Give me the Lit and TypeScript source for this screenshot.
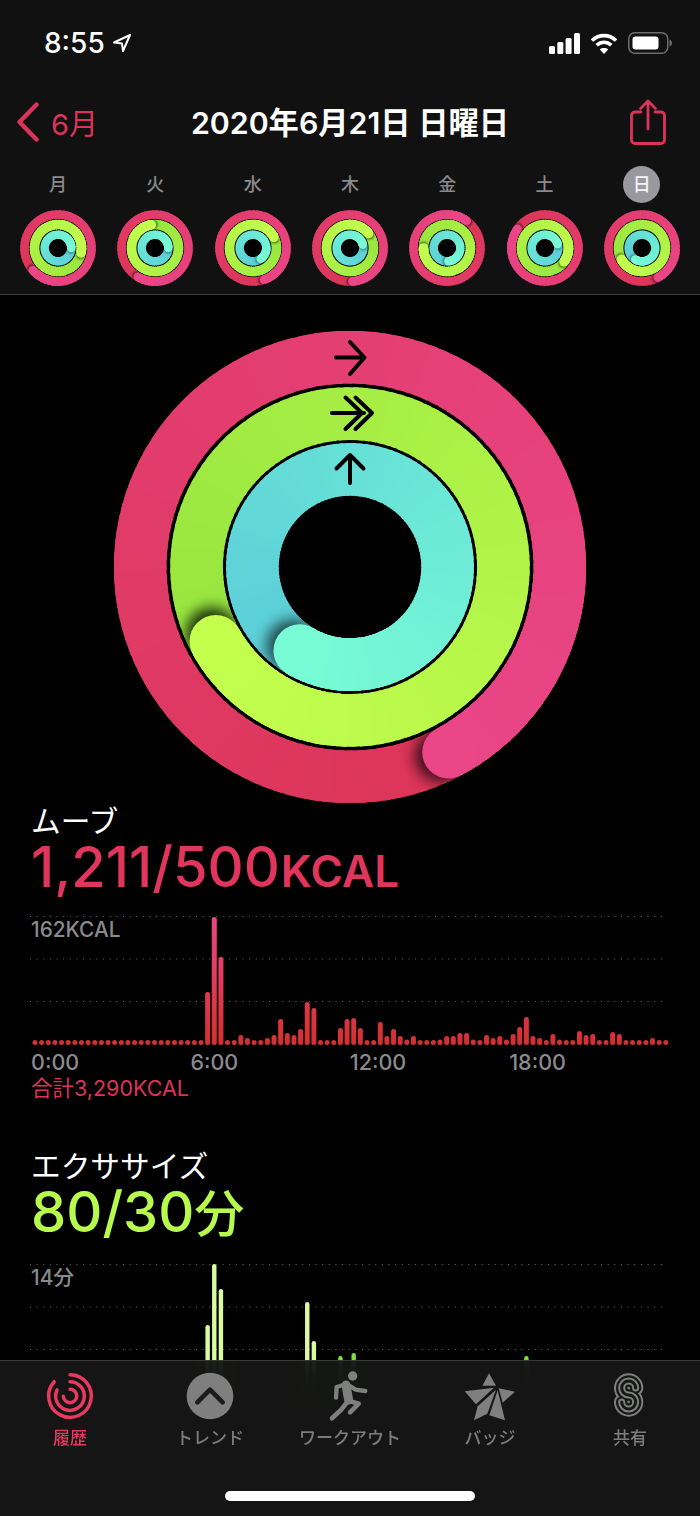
import { LitElement, html, css, svg } from "lit";
import { customElement } from "lit/decorators.js";

type RGB = [number, number, number];
const PINK: [RGB, RGB] = [[220, 53, 88], [234, 70, 136]];
const GREEN: [RGB, RGB] = [[151, 229, 63], [196, 255, 78]];
const BLUE: [RGB, RGB] = [[90, 204, 216], [120, 252, 214]];

function pt(cx: number, cy: number, r: number, deg: number) {
  const a = (deg * Math.PI) / 180;
  return [cx + r * Math.sin(a), cy - r * Math.cos(a)];
}
function arc(cx: number, cy: number, r: number, a0: number, a1: number) {
  const [x0, y0] = pt(cx, cy, r, a0);
  const [x1, y1] = pt(cx, cy, r, a1);
  return `M${x0.toFixed(2)} ${y0.toFixed(2)}A${r} ${r} 0 0 1 ${x1.toFixed(2)} ${y1.toFixed(2)}`;
}
function mix(c: [RGB, RGB], t: number) {
  return `rgb(${c[0].map((v, i) => Math.round(v + (c[1][i] - v) * t)).join(",")})`;
}

let uid = 0;
function ring(cx: number, cy: number, r: number, w: number, cap: number, c: [RGB, RGB], step: number, blurId: string, shadow: number) {
  const id = `clip${uid++}`;
  const segs = (from: number, to: number) => {
    const out = [];
    for (let d = from; d < to; d += step) {
      const end = Math.min(d + step * 1.6, 360);
      out.push(svg`<path d=${arc(cx, cy, r, cap + d, cap + end)} stroke=${mix(c, (d + step / 2) / 360)} stroke-width=${w} fill="none"></path>`);
    }
    return out;
  };
  const [hx, hy] = pt(cx, cy, r, cap);
  const shift = (w / r) * 57.3 * 0.16;
  const [sx, sy] = pt(cx, cy, r, cap + shift);
  const ro = r + w / 2;
  const ri = r - w / 2;
  const annulus = `M${cx - ro} ${cy}a${ro} ${ro} 0 1 0 ${2 * ro} 0a${ro} ${ro} 0 1 0 ${-2 * ro} 0ZM${cx - ri} ${cy}a${ri} ${ri} 0 1 0 ${2 * ri} 0a${ri} ${ri} 0 1 0 ${-2 * ri} 0Z`;
  return svg`
    ${segs(0, 360)}
    <clipPath id=${id}><path d=${annulus} clip-rule="evenodd"></path></clipPath>
    <g clip-path=${`url(#${id})`}>
      <circle cx=${sx} cy=${sy} r=${w / 2} fill="#000" opacity=${shadow} filter=${`url(#${blurId})`}></circle>
    </g>
    ${segs(300, 360)}
    <circle cx=${hx} cy=${hy} r=${w / 2} fill=${mix(c, 1)}></circle>`;
}

const MINI: [number, number, number][] = [
  [229, 102, 90], [211, 351, 90], [161, 63, 145], [176, 52, 76],
  [36, 270, 174], [305, 126, 74], [152, 241, 211],
];
const DAYS = ["月", "火", "水", "木", "金", "土", "日"];

const MOVE: Record<number, number> = {
  26: 53, 27: 128, 28: 88, 31: 10, 32: 7, 35: 7, 36: 10, 37: 26, 38: 12, 39: 10, 40: 16, 41: 43, 42: 37,
  46: 17, 47: 26, 48: 27, 49: 17, 52: 23, 53: 9, 54: 16, 55: 9, 56: 5.5, 57: 9, 61: 5.5, 62: 9, 63: 9, 64: 12,
  65: 12, 66: 5.5, 68: 10, 69: 7, 70: 9, 71: 5.5, 72: 11, 73: 18, 74: 28, 75: 9, 76: 7, 78: 11, 79: 5.5, 82: 14,
  83: 10, 84: 11, 87: 13, 88: 11, 93: 7,
};
const EXERCISE: [number, number][] = [
  [26, 67], [27, 128], [28, 103], [41, 90], [42, 51], [46, 36], [48, 39], [74, 36],
];
const STEP = 6.64;
const X0 = 32.5;
const BW = 5;

@customElement("app-root")
export class AppRoot extends LitElement {
  static styles = css`
    :host {
      display: block;
      position: relative;
      width: 700px;
      height: 1516px;
      overflow: hidden;
      background: #000;
      color: #fff;
      font-family: Inter, "Noto Sans CJK JP", sans-serif;
    }
    .page { display: flex; flex-direction: column; height: 1516px; }
    header { flex: none; height: 295px; box-sizing: border-box; background: #111; border-bottom: 1px solid #3c3c3e; }
    .status { height: 86px; display: flex; align-items: center; justify-content: space-between; padding: 0 28px 0 44px; }
    .time { display: flex; align-items: center; gap: 7px; font-size: 28px; font-weight: 500; }
    .status-icons { display: flex; align-items: center; gap: 10px; }
    .nav { height: 72px; display: grid; grid-template-columns: 1fr auto 1fr; align-items: center; padding: 0 17px; }
    .back { display: flex; align-items: center; gap: 12px; color: #dc3459; font-size: 29px; }
    .title { font-size: 30.3px; font-weight: 600; white-space: nowrap; margin-top: -2px; }
    .share { justify-self: end; display: block; margin: -1px 17px 0 0; }
    .week { display: grid; grid-template-columns: repeat(7, 97.3px); padding: 8px 0 0 9.4px; }
    .day { display: flex; flex-direction: column; align-items: center; }
    .label { width: 37px; height: 37px; line-height: 37px; border-radius: 50%; text-align: center; font-size: 18px; font-weight: 500; color: #8a8a8e; }
    .label.on { background: #98989e; color: #f4f4f6; }
    .mini { display: block; margin-top: 7px; }
    main { flex: 1; min-height: 0; overflow: hidden; padding-top: 36px; }
    .big { display: block; margin: 0 auto; }
    section { padding: 0 31px; }
    .name { font-size: 29.7px; line-height: 36px; height: 36px; white-space: nowrap; }
    .value { font-size: 56px; line-height: 56px; height: 56px; font-weight: 500; white-space: nowrap; }
    .value small { font-size: 44px; font-weight: 600; margin-left: 1px; letter-spacing: 0.3px; }
    .value .unit { font-size: 50px; }
    .red { color: #e0355c; }
    .lime { color: #b8f94e; }
    .chart { position: relative; margin: 17px -31px 0; height: 137px; }
    .chart.ex { margin-top: 20px; height: 140px; }
    .chart svg { display: block; }
    .max { position: absolute; left: 31px; top: 6px; font-size: 20.8px; line-height: 24px; font-weight: 500; color: #8a8a8e; }
    .axis { display: grid; grid-template-columns: repeat(4, 159.4px); font-size: 21.5px; line-height: 26px; font-weight: 500; color: #8a8a8e; }
    .total { font-size: 21.5px; line-height: 26px; color: #dc3459; }
    .second { margin-top: 47px; }
    .tabbar {
      position: absolute; left: 0; right: 0; bottom: 0; height: 156px; box-sizing: border-box;
      background: rgba(21, 23, 21, 0.93); backdrop-filter: blur(18px);
      border-top: 1.5px solid #3a3a3a; display: flex; flex-direction: column;
    }
    .tabs { display: grid; grid-template-columns: repeat(5, 140px); }
    .tab { display: flex; flex-direction: column; align-items: center; padding-top: 4px; color: #7c7c7c; font-size: 17px; line-height: 24px; font-weight: 500; white-space: nowrap; }
    .tab svg { display: block; margin-bottom: 1px; }
    .tab.on { color: #e8395f; }
    .home { width: 250px; height: 10px; border-radius: 5px; background: #fff; margin: 41px auto 0; }
    .ic { fill: #7f7f7f; }
    .runner { fill: none; stroke: #7f7f7f; stroke-linecap: round; stroke-linejoin: round; }
    .arrows { fill: none; stroke: #000; stroke-width: 4; stroke-linecap: round; stroke-linejoin: round; }
  `;

  private bigRings() {
    const cx = 236, cy = 236;
    return html`<svg class="big" width="472" height="472" viewBox="0 0 472 472">
      <defs><filter id="blurBig" x="-50%" y="-50%" width="200%" height="200%"><feGaussianBlur stdDeviation="7"></feGaussianBlur></filter></defs>
      ${ring(cx, cy, 209.8, 52.6, 152, PINK, 3, "blurBig", 0.7)}
      ${ring(cx, cy, 153.4, 52.6, 241, GREEN, 3, "blurBig", 0.8)}
      ${ring(cx, cy, 97.6, 52.6, 211, BLUE, 3, "blurBig", 0.65)}
      <g class="arrows">
        <path d="M222 26.5H250.5M236 11L250.5 26.5L236 43"></path>
        <path d="M218 82H250M231.500 66.500L248 82L231.500 98M241.500 66.500L258 82L241.500 98"></path>
        <path d="M236 152V124M222.500 137.500L236 124L249.500 137.500"></path>
      </g>
    </svg>`;
  }

  private miniRing(i: number) {
    const [p, g, b] = MINI[i];
    const id = `blurMini${i}`;
    return html`<svg class="mini" width="76" height="76" viewBox="0 0 76 76">
      <defs><filter id=${id} x="-50%" y="-50%" width="200%" height="200%"><feGaussianBlur stdDeviation="1.2"></feGaussianBlur></filter></defs>
      <circle cx="38" cy="38" r="34" fill="#000"></circle>
      ${ring(38, 38, 33.5, 8.6, p, PINK, 6, id, 0.6)}
      ${ring(38, 38, 23.5, 9.6, g, GREEN, 6, id, 0.5)}
      ${ring(38, 38, 13.3, 8.4, b, BLUE, 6, id, 0.4)}
    </svg>`;
  }

  private grid(top: number) {
    return [0, 1, 2].map((n) => svg`<line x1="30" x2="667" y1=${top + n * 42.5 + 0.5} y2=${top + n * 42.5 + 0.5} stroke="#6e6e6e" stroke-width="1" stroke-dasharray="1 5.64"></line>`);
  }

  private moveChart() {
    const base = 133;
    const bars = [];
    for (let i = 0; i < 96; i++) {
      const h = MOVE[i] ?? 5;
      bars.push(svg`<rect x=${X0 + i * STEP} y=${base - h} width=${BW} height=${h} rx=${BW / 2} fill="url(#moveGrad)"></rect>`);
    }
    return html`<div class="chart">
      <svg width="700" height="137" viewBox="0 0 700 137">
        <defs>
          <linearGradient id="moveGrad" gradientUnits="userSpaceOnUse" x1="0" y1="5" x2="0" y2="133">
            <stop offset="0" stop-color="#ea4585"></stop>
            <stop offset="0.55" stop-color="#e03a55"></stop>
            <stop offset="1" stop-color="#d42f2f"></stop>
          </linearGradient>
        </defs>
        ${this.grid(4)}
        ${bars}
      </svg>
      <div class="max">162KCAL</div>
    </div>`;
  }

  private exerciseChart() {
    const base = 132;
    return html`<div class="chart ex">
      <svg width="700" height="140" viewBox="0 0 700 140">
        ${this.grid(4)}
        ${EXERCISE.map(([i, h]) => svg`<rect x=${X0 + i * STEP + 0.3} y=${base - h} width="4.4" height=${h} rx="2.2" fill=${h > 45 ? "#dcfb9e" : "#7ce03a"}></rect>`)}
      </svg>
      <div class="max">14分</div>
    </div>`;
  }

  private historyIcon() {
    const c = 90;
    const s = "fill:none;stroke:#e8395f;stroke-width:10.5;stroke-linecap:round";
    const long = (r: number, a: number) => {
      const [x0, y0] = pt(c, c + 3, r, 0);
      const [x1, y1] = pt(c, c + 3, r, a);
      return `M${x0} ${y0}A${r} ${r} 0 1 1 ${x1} ${y1}`;
    };
    return html`<svg width="60" height="60" viewBox="0 0 180 180" style=${s}>
      <path d=${long(64, 312)}></path><path d=${long(43, 295)}></path><path d=${long(20, 268)}></path>
    </svg>`;
  }

  render() {
    const s = "M107 69A21 21 0 1 0 86 90A21 21 0 1 1 65 111";
    return html`<div class="page">
      <header>
        <div class="status">
          <div class="time">8:55
            <svg width="20" height="20" viewBox="0 0 20 20"><path d="M18 2L2 9.500L10 10.500L11 18Z" fill="none" stroke="#fff" stroke-width="2" stroke-linejoin="round"></path></svg>
          </div>
          <div class="status-icons">
            <svg width="31" height="21" viewBox="0 0 31 21" fill="#fff">
              <rect x="0" y="13" width="6" height="8" rx="1.500"></rect><rect x="8.300" y="9" width="6" height="12" rx="1.500"></rect><rect x="16.600" y="5" width="6" height="16" rx="1.500"></rect><rect x="25" y="0" width="6" height="21" rx="1.500"></rect>
            </svg>
            <svg width="28" height="21" viewBox="0 0 28 21" fill="none" stroke="#fff" stroke-width="3.600">
              <path d="M2 7.500C9 1 19 1 26 7.500"></path><path d="M6.700 12.300C11 8.300 17 8.300 21.300 12.300"></path><path d="M14 21L9.800 16.500C12 14.600 16 14.600 18.200 16.500Z" fill="#fff" stroke="none"></path>
            </svg>
            <svg width="44" height="22" viewBox="0 0 44 22">
              <rect x="0.750" y="0.750" width="39" height="20.500" rx="6" fill="none" stroke="#6d6d6d" stroke-width="1.500"></rect>
              <rect x="4.500" y="4.500" width="26" height="13" rx="3" fill="#fff"></rect>
              <path d="M41.500 7.500C43 8 44 9.500 44 11S43 14 41.500 14.500Z" fill="#6d6d6d"></path>
            </svg>
          </div>
        </div>
        <div class="nav">
          <div class="back">
            <svg width="22" height="40" viewBox="0 0 22 40"><path d="M19.500 2.500L2.500 20L19.500 37.500" fill="none" stroke="#dc3459" stroke-width="4.400" stroke-linecap="round" stroke-linejoin="round"></path></svg>
            <span>6月</span>
          </div>
          <div class="title">2020年6月21日 日曜日</div>
          <svg class="share" width="36" height="46" viewBox="0 0 36 46" fill="none" stroke="#dc3459" stroke-width="2.800" stroke-linecap="round" stroke-linejoin="round">
            <path d="M11 13H5A3.500 3.500 0 0 0 1.500 16.500V41A3.500 3.500 0 0 0 5 44.500H31A3.500 3.500 0 0 0 34.500 41V16.500A3.500 3.500 0 0 0 31 13H25"></path>
            <path d="M18 30V2M10.500 9.500L18 2L25.500 9.500"></path>
          </svg>
        </div>
        <div class="week">
          ${DAYS.map((d, i) => html`<div class="day"><div class="label ${i === 6 ? "on" : ""}">${d}</div>${this.miniRing(i)}</div>`)}
        </div>
      </header>
      <main>
        ${this.bigRings()}
        <section>
          <div class="name">ムーブ</div>
          <div class="value red">1,211/500<small>KCAL</small></div>
          ${this.moveChart()}
          <div class="axis"><span>0:00</span><span>6:00</span><span>12:00</span><span>18:00</span></div>
          <div class="total">合計3,290KCAL</div>
        </section>
        <section class="second">
          <div class="name">エクササイズ</div>
          <div class="value lime">80/30<span class="unit">分</span></div>
          ${this.exerciseChart()}
        </section>
      </main>
    </div>
    <nav class="tabbar">
      <div class="tabs">
        <div class="tab on">${this.historyIcon()}<span>履歴</span></div>
        <div class="tab">
          <svg width="60" height="60" viewBox="0 0 180 180"><circle cx="90" cy="93" r="70" fill="#7f7f7f"></circle><path d="M52 112L90 74L128 112" fill="none" stroke="#1b1c1b" stroke-width="14" stroke-linecap="round" stroke-linejoin="round"></path></svg>
          <span>トレンド</span>
        </div>
        <div class="tab">
          <svg width="60" height="60" viewBox="0 0 180 180">
            <circle class="ic" cx="98" cy="33" r="14"></circle>
            <g class="runner">
              <path d="M48 98L50 66L80 57L107 74L136 78" stroke-width="13"></path>
              <path d="M78 60L86 105" stroke-width="27"></path>
              <path d="M84 108L62 136L36 160" stroke-width="14"></path>
              <path d="M88 108L116 116L90 142" stroke-width="14"></path>
            </g>
          </svg>
          <span>ワークアウト</span>
        </div>
        <div class="tab">
          <svg width="60" height="60" viewBox="0 0 180 180" class="ic">
            <path d="M87 25L108 62L67 62Z"></path>
            <path d="M14 79L102 68L48 118Z"></path>
            <path d="M42 166L53 124L108 74L82 146Z"></path>
            <path d="M88 151L113 76L135 166Z"></path>
            <path d="M116 70L165 80L128 113Z"></path>
          </svg>
          <span>バッジ</span>
        </div>
        <div class="tab">
          <svg width="60" height="60" viewBox="0 0 180 180" fill="none" stroke-linecap="round" stroke-linejoin="round">
            <path d=${s} stroke="#7f7f7f" stroke-width="46"></path>
            <path d=${s} stroke="#161816" stroke-width="34"></path>
            <path d=${s} stroke="#7f7f7f" stroke-width="21"></path>
            <path d=${s} stroke="#161816" stroke-width="9"></path>
          </svg>
          <span>共有</span>
        </div>
      </div>
      <div class="home"></div>
    </nav>`;
  }
}
